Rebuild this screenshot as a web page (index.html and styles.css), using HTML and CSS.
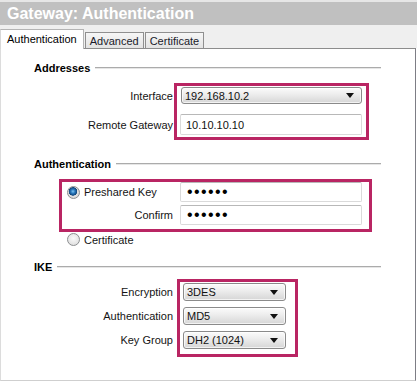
FILE: index.html
```html
<!DOCTYPE html>
<html lang="en">

<head>
  <meta charset="UTF-8">
  <meta name="viewport" content="width=device-width, initial-scale=1.0">
  <title>Gateway: Authentication</title>
  <link rel="stylesheet" href="styles.css">
</head>

<body>
  <header class="titlebar">Gateway: Authentication</header>

  <!-- Tabs -->
  <nav class="tabs">
    <span class="tab active">Authentication</span>
    <span class="tab">Advanced</span>
    <span class="tab">Certificate</span>
  </nav>

  <main class="panel">
    <!-- Addresses -->
    <section class="group">
      <h3 class="group-title">Addresses</h3>
      <div class="form form-addr">
        <div class="mark mark-addr"></div>
        <label class="lbl r1">Interface</label>
        <div class="select ctl r1 sel-wide">
          <span>192.168.10.2</span>
          <svg width="8" height="5" viewBox="0 0 8 5"><path d="M0,0 H8 L4,5 Z" fill="#111" /></svg>
        </div>
        <label class="lbl r2">Remote Gateway</label>
        <input class="field ctl r2" type="text" value="10.10.10.10">
      </div>
    </section>

    <!-- Authentication -->
    <section class="group">
      <h3 class="group-title">Authentication</h3>
      <div class="form form-auth">
        <div class="mark mark-auth"></div>
        <label class="choice r1"><input type="radio" name="auth" checked> Preshared Key</label>
        <input class="field pass ctl r1" type="password" value="secret">
        <label class="lbl r2">Confirm</label>
        <input class="field pass ctl r2" type="password" value="secret">
        <label class="choice r3"><input type="radio" name="auth"> Certificate</label>
      </div>
    </section>

    <!-- IKE -->
    <section class="group">
      <h3 class="group-title">IKE</h3>
      <div class="form form-ike">
        <div class="mark mark-ike"></div>
        <label class="lbl r1">Encryption</label>
        <div class="select ctl r1">
          <span>3DES</span>
          <svg width="8" height="5" viewBox="0 0 8 5"><path d="M0,0 H8 L4,5 Z" fill="#111" /></svg>
        </div>
        <label class="lbl r2">Authentication</label>
        <div class="select ctl r2">
          <span>MD5</span>
          <svg width="8" height="5" viewBox="0 0 8 5"><path d="M0,0 H8 L4,5 Z" fill="#111" /></svg>
        </div>
        <label class="lbl r3">Key Group</label>
        <div class="select ctl r3">
          <span>DH2 (1024)</span>
          <svg width="8" height="5" viewBox="0 0 8 5"><path d="M0,0 H8 L4,5 Z" fill="#111" /></svg>
        </div>
      </div>
    </section>
  </main>
</body>

</html>
```

FILE: styles.css
```css
body {
  margin: 0;
  width: 417px;
  font-family: "Liberation Sans", Arial, sans-serif;
  font-size: 11px;
  color: #141414;
  background: #fff;
}

/* Title bar */
.titlebar {
  height: 23px;
  border-top: 2px solid #e6e6e6;
  background: #c0c0c0;
  color: #fff;
  font-size: 16px;
  font-weight: bold;
  line-height: 23px;
  padding-left: 7px;
}

/* Tabs */
.tabs {
  display: flex;
  align-items: flex-end;
  gap: 1px;
  height: 23px;
  background: #efefef;
}

.tab {
  height: 15px;
  padding: 0 4px;
  line-height: 16px;
  border: 1px solid #8f8f8f;
  border-bottom: none;
  background: linear-gradient(#f6f6f6, #e3e3e3);
  color: #1a1a2a;
}

.tab.active {
  position: relative;
  z-index: 1;
  height: 19px;
  margin-bottom: -1px;
  padding: 0 6px;
  line-height: 18px;
  border-color: #b4b4b4;
  border-left-color: #d8d8d8;
  background: #fff;
  color: #000;
}

/* Panel */
.panel {
  box-sizing: border-box;
  width: 416px;
  height: 333px;
  border: 1px solid #8c8c8c;
  border-right-color: #7d7d85;
  border-bottom-color: #cfcfcf;
  border-left-color: #dcdcdc;
  background: #fff;
}

.group-title {
  display: flex;
  align-items: center;
  gap: 5px;
  height: 14px;
  margin: 0 34px 0 33px;
  font-size: 11px;
  font-weight: bold;
  color: #000;
}

.group-title::after {
  content: '';
  flex: 1;
  border-top: 1px solid #ababab;
  border-bottom: 1px solid #e6e6e6;
}

.group:nth-child(1) .group-title { margin-top: 12px; }
.group:nth-child(2) .group-title { margin-top: 22px; }
.group:nth-child(3) .group-title { margin-top: 14px; }

/* Forms */
.form {
  display: grid;
  grid-template-columns: 153px 182px;
  column-gap: 7px;
  align-items: center;
  margin-left: 19px;
}

.form-addr {
  margin-top: 12px;
  grid-template-rows: 17px 21px;
  row-gap: 10px;
}

.form-auth {
  margin-top: 11px;
  grid-template-rows: 20px 20px 18px;
  row-gap: 3px;
}

.form-ike {
  margin-top: 9px;
  grid-template-columns: 153px 103px;
  grid-template-rows: 18px 18px 18px;
  column-gap: 10px;
  row-gap: 6px;
}

.r1 { grid-row: 1; }
.r2 { grid-row: 2; }
.r3 { grid-row: 3; }

.lbl {
  grid-column: 1;
  text-align: right;
}

.ctl {
  grid-column: 2;
}

/* Highlight boxes */
.mark {
  align-self: stretch;
  border: 3px solid #b92563;
}

.mark-addr {
  grid-column: 2;
  grid-row: 1 / 3;
  margin: -4px -7px -5px -6px;
}

.mark-auth {
  grid-column: 1 / 3;
  grid-row: 1 / 3;
  margin: -3px -10px -7px 39px;
}

.mark-ike {
  grid-column: 2;
  grid-row: 1 / 4;
  margin: -4px -12px -8px -6px;
}

/* Controls */
.field {
  box-sizing: border-box;
  width: 182px;
  height: 21px;
  margin: 0;
  padding: 0 5px;
  border: 1px solid #dadada;
  border-top-color: #b8b8b8;
  border-radius: 2px;
  font-family: inherit;
  font-size: 11px;
  color: #111;
  background: #fff;
  outline: none;
}

.field.pass {
  height: 20px;
  padding-left: 6px;
  font-size: 16px;
  letter-spacing: 1.4px;
  color: #000;
}

.select {
  box-sizing: border-box;
  display: flex;
  align-items: center;
  justify-content: space-between;
  height: 18px;
  padding: 0 7px 0 3px;
  border: 1px solid #8a8a8a;
  border-radius: 3px;
  background: linear-gradient(#fbfbfb, #ececec 45%, #d6d6d6);
  box-shadow: inset 0 0 0 1px rgba(255, 255, 255, 0.7);
  color: #111;
}

.sel-wide {
  width: 181px;
  height: 17px;
  margin-left: 1px;
}

.choice {
  grid-column: 1 / 3;
  display: flex;
  align-items: center;
  gap: 4px;
  margin-left: 47px;
}

.choice.r3 {
  margin-top: 4px;
  align-self: end;
}

.choice input {
  appearance: none;
  box-sizing: border-box;
  width: 13px;
  height: 13px;
  margin: 0;
  border: 1px solid #8c8e90;
  border-radius: 50%;
  background: radial-gradient(circle at 50% 40%, #fafafa, #d9d9d9);
}

.choice input:checked {
  background:
    radial-gradient(circle at 45% 40%, #7fc4f0 0, #2a7bc0 2px, #10457a 4px, transparent 4.5px),
    radial-gradient(circle, #f4f4f4, #cfcfcf);
}
```
